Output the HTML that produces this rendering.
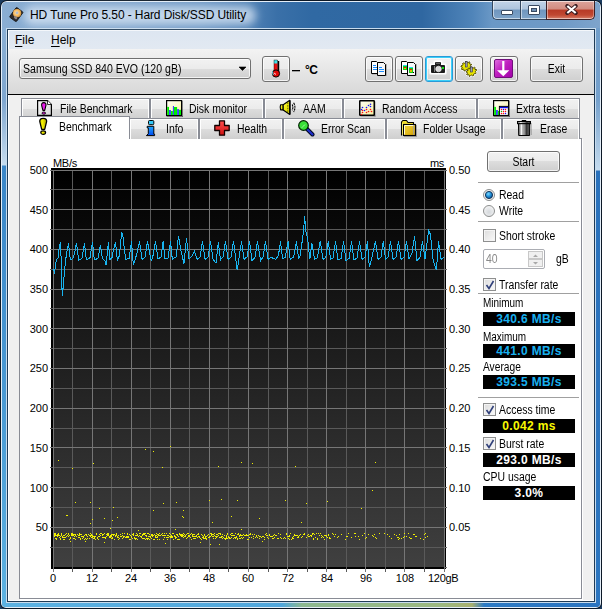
<!DOCTYPE html>
<html><head><meta charset="utf-8">
<style>
*{box-sizing:border-box}
html,body{margin:0;padding:0}
body{width:602px;height:609px;overflow:hidden;position:relative;background:#1b3c60;font-family:"Liberation Sans",sans-serif;font-size:11px;color:#000}
.a{position:absolute}
#win{position:absolute;left:0;top:0;width:602px;height:609px;border-radius:7px 7px 6px 6px;background:#0c1826;overflow:hidden}
#l1{position:absolute;left:1px;top:1px;width:600px;height:607px;border-radius:6px 6px 5px 5px;background:#e4eef8;overflow:hidden}
#blue{position:absolute;left:1px;top:1px;width:598px;height:605px;border-radius:5px 5px 4px 4px;overflow:hidden;background:#3a80c4}
#lstrip{position:absolute;left:0;top:0;width:5px;height:605px;background:linear-gradient(180deg,#8fb3d6 0,#7ea6cf 98px,#c6dcef 163px,#3a86c8 164px,#4a9ad4 400px,#5cb2e2 605px)}
#rstrip{position:absolute;right:0;top:0;width:5px;height:605px;background:linear-gradient(180deg,#6f9cc8 0,#74a0cc 98px,#c4dbee 168px,#2a72bc 169px,#2c76c0 605px)}
#bstrip{position:absolute;left:0;bottom:0;width:598px;height:5px;background:linear-gradient(90deg,#5cb2e2 0,#4fa6dc 280px,#8cb890 300px,#9cb880 440px,#a8b070 470px,#2c7ac4 482px,#2a74c0 598px)}
#titlebar{position:absolute;left:0;top:0;width:598px;height:26px;
 background:linear-gradient(90deg,#8aaed3 0,#7ca2ca 120px,#6a95c2 200px,#5283b6 245px,#3a70a8 275px,#3069a3 310px,#2f67a1 420px,#4f84b9 470px,#6a98c6 490px,#6f9ac6 560px,#7ea4cc 598px)}
#l2{position:absolute;left:6px;top:28px;width:590px;height:575px;background:#c8dcee}
#dk{position:absolute;left:7px;top:29px;width:588px;height:573px;background:#1f3b56}
#glow{position:absolute;left:24px;top:6px;width:232px;height:19px;border-radius:9px;background:rgba(225,236,248,.72);filter:blur(4px)}
#title{position:absolute;left:30px;top:8px;font-size:12px;color:#000;letter-spacing:-0.1px;white-space:nowrap}
#client{position:absolute;left:8px;top:30px;width:586px;height:571px;background:#f0f0f0;border-left:1px solid #fff;border-bottom:1px solid #fff}
#menubar{position:absolute;left:-1px;top:0;width:586px;height:19px;background:linear-gradient(#dde6f1,#e2e9f2);border-top:1px solid #f4f7fb;border-left:1px solid #fff}
.menu{position:absolute;top:1.5px;font-size:12px;line-height:14px}
.menu u{text-decoration:underline;text-underline-offset:1.5px;text-decoration-thickness:1px}
#toolbar{position:absolute;left:-1px;top:19px;width:586px;height:46px;background:linear-gradient(#f3f3f3,#d8d8d8);border-bottom:1px solid #000}
.btn{position:absolute;border:1px solid #707070;border-radius:3px;background:linear-gradient(#f2f2f2 0%,#ebebeb 50%,#dddddd 50%,#cfcfcf 100%);box-shadow:inset 0 0 0 1px rgba(255,255,255,.75)}
.btnf{border-color:#2a9ad8;box-shadow:inset 0 0 0 1px #3cd0f8, inset 0 0 0 2px rgba(255,255,255,.6)}
.tab{position:absolute;height:21px;border:1px solid #898c95;border-bottom:none;background:linear-gradient(#f2f2f2 0%,#ebebeb 50%,#dddddd 50%,#cfcfcf 100%);box-shadow:inset 1px 1px 0 #fff,inset -1px 0 0 #fff;white-space:nowrap;letter-spacing:-0.3px}
.tab span{position:absolute;top:3.8px;line-height:13px;font-size:12px;letter-spacing:0;transform:scaleX(.87);transform-origin:0 0}
.tab2 span{top:3.8px}
.tab svg{position:absolute;top:2px}
#panel{position:absolute;left:11px;top:109px;width:563px;height:461px;background:#fff;border:1px solid #898c95;box-shadow:1px 1px 0 #fff}
.yl{position:absolute;left:0;width:48px;text-align:right;line-height:13px;font-size:11px}
.yr{position:absolute;left:449px;line-height:13px;font-size:11px}
.xl{position:absolute;top:572px;width:40px;text-align:center;line-height:13px;font-size:11px}
.lbl{position:absolute;left:483px;line-height:13px;font-size:12px;white-space:nowrap;transform:scaleX(.87);transform-origin:0 0}
.box{position:absolute;left:483px;width:92px;height:14px;background:#000;color:#18b0f0;font-weight:bold;font-size:12px;text-align:center;line-height:14.5px;letter-spacing:0.35px}
.sep{position:absolute;left:478px;width:101px;height:1px;background:#a0a0a0}
.cb{position:absolute;left:483px;width:13px;height:13px;border:1px solid #8e8f8f;background:linear-gradient(135deg,#dcdcdc,#fafafa);box-shadow:inset 0 0 0 1px #f4f4f4}
</style></head><body>
<div id="win">
 <div id="l1"><div id="blue"><div id="lstrip"></div><div id="rstrip"></div><div id="bstrip"></div><div id="titlebar"></div></div></div>
 <div id="l2"></div><div id="dk"></div>
 <div id="glow"></div>
 <!-- app icon -->
 <svg class="a" style="left:5px;top:4px" width="24" height="22" viewBox="0 0 24 22">
  <defs><radialGradient id="dg" cx=".45" cy=".45" r=".6"><stop offset="0" stop-color="#ffe8b0"/><stop offset=".6" stop-color="#f4b860"/><stop offset="1" stop-color="#c88830"/></radialGradient></defs>
  <g transform="translate(11.3 10.6) rotate(36)"><rect x="-4.2" y="-6" width="8.4" height="12" rx="1" fill="#2c2a2a" stroke="#141414" stroke-width=".8"/></g>
  <circle cx="12.1" cy="9.2" r="4.1" fill="url(#dg)"/>
  <circle cx="12" cy="8.8" r="1.4" fill="#b4bccc"/>
  <ellipse cx="10.6" cy="13.6" rx="1.8" ry="1.3" fill="#8a8282" transform="rotate(36 10.6 13.6)"/>
 </svg>
 <div id="title">HD Tune Pro 5.50 - Hard Disk/SSD Utility</div>
 <!-- caption buttons -->
 <div class="a" style="left:492px;top:1px;width:29px;height:19px;border:1px solid #34475e;border-top:none;border-right:none;border-radius:0 0 0 5px;background:linear-gradient(#c2d4e8 0%,#aec4dc 45%,#7096be 50%,#7ea4ca 100%);box-shadow:inset 0 -1px 0 rgba(255,255,255,.55),inset 1px 0 0 rgba(255,255,255,.55),inset 0 1px 0 rgba(255,255,255,.5)"></div>
 <div class="a" style="left:520px;top:1px;width:27px;height:19px;border:1px solid #34475e;border-top:none;border-right:none;background:linear-gradient(#c2d4e8 0%,#aec4dc 45%,#7096be 50%,#7ea4ca 100%);box-shadow:inset 0 -1px 0 rgba(255,255,255,.55),inset 1px 0 0 rgba(255,255,255,.55),inset 0 1px 0 rgba(255,255,255,.5)"></div>
 <div class="a" style="left:546px;top:1px;width:49px;height:19px;border:1px solid #3e2024;border-top:none;border-radius:0 0 5px 0;background:linear-gradient(#dca49c 0%,#d28c80 45%,#b83a26 50%,#c04832 78%,#d8806a 100%);box-shadow:inset 0 -1px 0 rgba(255,255,255,.5),inset 1px 0 0 rgba(255,255,255,.45),inset -1px 0 0 rgba(255,255,255,.3),inset 0 1px 0 rgba(255,255,255,.6)"></div>
 <div class="a" style="left:501px;top:10px;width:12px;height:5px;background:#fff;border:1px solid #3a4a62;border-radius:1px"></div>
 <div class="a" style="left:528px;top:5px;width:12px;height:10px;background:#fff;border:1px solid #3a4a62;border-radius:1px"></div>
 <div class="a" style="left:531px;top:8px;width:6px;height:4px;background:#7090b4;border:1px solid #3a4a62"></div>
 <svg class="a" style="left:565px;top:4px" width="13" height="11" viewBox="0 0 13 11"><path d="M2.3 2 L10.7 9 M10.7 2 L2.3 9" stroke="#3a1c20" stroke-width="4" stroke-linecap="round"/><path d="M2.3 2 L10.7 9 M10.7 2 L2.3 9" stroke="#fff" stroke-width="2.2" stroke-linecap="butt"/></svg>
 <div id="client">
  <div id="menubar">
   <div class="menu" style="left:6px"><u>F</u>ile</div>
   <div class="menu" style="left:42px"><u>H</u>elp</div>
  </div>
  <div id="toolbar"></div>
 </div>

 <!-- combobox -->
 <div class="btn" style="left:19px;top:58px;width:232px;height:21px;border-radius:3px"></div>
 <div class="a" style="left:23px;top:63px;font-size:12px;line-height:13px;white-space:nowrap;transform:scaleX(.88);transform-origin:0 0">Samsung SSD 840 EVO (120 gB)</div>
 <svg class="a" style="left:238px;top:66px" width="9" height="6"><path d="M1 1H8L4.5 4.5Z" fill="#000" stroke="#000" stroke-width=".6"/></svg>
 <!-- thermometer button -->
 <div class="btn" style="left:262px;top:56px;width:28px;height:26px"></div>
 <svg class="a" style="left:262px;top:56px" width="28" height="26" viewBox="0 0 28 26">
  <rect x="15.6" y="5" width="1.6" height="11" fill="#000"/>
  <rect x="12" y="4" width="3.6" height="12" fill="#e81010"/>
  <rect x="12" y="4" width="3.6" height="3.5" fill="#40e0e8"/>
  <rect x="12" y="4" width="3.6" height="12" fill="none" stroke="#000" stroke-width=".4"/>
  <circle cx="14" cy="17.5" r="3.6" fill="#e00808" stroke="#000" stroke-width="1"/>
  <path d="M10.6 15.5Q10.3 17.5 11.5 19" stroke="#50e0f0" stroke-width="1" fill="none"/>
  <path d="M12.3 16.8Q12.8 18.2 13.8 18.3" stroke="#fff" stroke-width="1" fill="none"/>
 </svg>
 <div class="a" style="left:292px;top:70px;width:8px;height:1px;background:#000;box-shadow:0 0.6px 0 rgba(0,0,0,.5)"></div>
 <div class="a" style="left:305px;top:62.5px;font-size:12px;font-weight:bold;white-space:nowrap;line-height:14px;letter-spacing:-0.6px">°C</div>
 <!-- toolbar buttons -->
 <div class="btn" style="left:365px;top:56px;width:28px;height:26px"></div>
 <div class="btn" style="left:395px;top:56px;width:28px;height:26px"></div>
 <div class="btn btnf" style="left:425px;top:56px;width:28px;height:26px"></div>
 <div class="btn" style="left:455px;top:56px;width:28px;height:26px"></div>
 <div class="btn" style="left:490px;top:56px;width:28px;height:26px"></div>
 <div class="btn" style="left:530px;top:56px;width:53px;height:26px"></div>
 <div class="a" style="left:530px;top:62.5px;width:53px;text-align:center;font-size:12px;line-height:13px;transform:scaleX(.87)">Exit</div>
 <!-- icons -->
 <svg class="a" style="left:366px;top:57px" width="25" height="24" viewBox="0 0 25 24" shape-rendering="crispEdges">
  <path d="M6 6H12V18H6Z" fill="#a0a0a0" opacity=".5"/>
  <path d="M5.5 4.5H10.5L11.5 5.5V16.5H5.5Z" fill="#fff" stroke="#000" shape-rendering="auto"/>
  <g fill="#1a8cff"><rect x="7" y="8" width="3" height="1"/><rect x="7" y="10" width="4" height="1"/><rect x="7" y="12" width="4" height="1"/></g>
  <path d="M12 19H21V7H20V18H12Z" fill="#909090" opacity=".6"/>
  <path d="M11.5 5.5H17.5L19.5 7.5V18.5H11.5Z" fill="#f6f6f6" stroke="#000" shape-rendering="auto"/>
  <g fill="#1a8cff"><rect x="13" y="10" width="3" height="1"/><rect x="13" y="12" width="5" height="1"/><rect x="13" y="14" width="5" height="1"/></g>
 </svg>
 <svg class="a" style="left:396px;top:57px" width="25" height="24" viewBox="0 0 25 24" shape-rendering="crispEdges">
  <path d="M5.5 4.5H10.5L11.5 5.5V16.5H5.5Z" fill="#fff" stroke="#000" shape-rendering="auto"/>
  <rect x="7" y="8" width="4" height="1" fill="#20d8f0"/><rect x="7" y="9" width="4" height="4" fill="#10d010"/><rect x="8" y="10" width="2" height="1" fill="#f01010"/><rect x="8" y="11" width="2" height="1" fill="#e8c000"/>
  <path d="M12 19H21V7H20V18H12Z" fill="#909090" opacity=".6"/>
  <path d="M11.5 5.5H17.5L19.5 7.5V18.5H11.5Z" fill="#f6f6f6" stroke="#000" shape-rendering="auto"/>
  <rect x="13" y="10" width="4" height="1" fill="#20d8f0"/><rect x="13" y="11" width="4" height="5" fill="#10d010"/><rect x="14" y="12" width="2" height="1" fill="#f01010"/><rect x="14" y="13" width="2" height="2" fill="#e8c000"/><rect x="17" y="15" width="1" height="1" fill="#000"/>
 </svg>
 <svg class="a" style="left:426px;top:57px" width="25" height="24" viewBox="0 0 25 24">
  <path d="M8.5 4.5H15.5V7.5H19.5V16.5H4.5V7.5H8.5Z" fill="none" stroke="#fff" stroke-width="2" stroke-linejoin="round"/>
  <rect x="5" y="8" width="14" height="8" rx="1" fill="#1c1c1c"/>
  <rect x="9" y="5" width="6" height="3.5" rx="1" fill="#1c1c1c"/>
  <rect x="10" y="5.7" width="4" height="1" fill="#777"/>
  <rect x="8" y="9" width="1" height="6" fill="#808080"/>
  <circle cx="12.5" cy="12" r="2.8" fill="#d8d8d8" stroke="#fff" stroke-width=".6"/>
  <rect x="16" y="10" width="2" height="2" fill="#10e010"/>
 </svg>
 <svg class="a" style="left:456px;top:57px" width="25" height="24" viewBox="0 0 25 24">
  <g fill="#fff" stroke="#fff" stroke-width="2" stroke-linejoin="round"><polygon points="13.84,7.10 15.37,7.12 15.52,7.90 14.19,8.84 14.07,9.46 15.03,10.37 14.56,11.16 13.02,11.22 12.49,11.70 12.44,13.08 11.56,13.51 10.53,12.65 9.84,12.77 8.80,13.97 7.92,13.84 7.89,12.47 7.36,12.17 5.81,12.63 5.35,12.00 6.33,10.76 6.21,10.18 4.88,9.68 5.05,8.85 6.58,8.32 6.93,7.73 6.44,6.51 7.15,5.87 8.52,6.29 9.18,5.97 9.75,4.60 10.68,4.44 11.25,5.62 11.91,5.72 13.28,4.84 13.99,5.24 13.49,6.63"/><polygon points="19.04,12.50 20.57,12.52 20.72,13.30 19.39,14.24 19.27,14.86 20.23,15.77 19.76,16.56 18.22,16.62 17.69,17.10 17.64,18.48 16.76,18.91 15.73,18.05 15.04,18.17 14.00,19.37 13.12,19.24 13.09,17.87 12.56,17.57 11.01,18.03 10.55,17.40 11.53,16.16 11.41,15.58 10.08,15.08 10.25,14.25 11.78,13.72 12.13,13.13 11.64,11.91 12.35,11.27 13.72,11.69 14.38,11.37 14.95,10.00 15.88,9.84 16.45,11.02 17.11,11.12 18.48,10.24 19.19,10.64 18.69,12.03"/></g>
  <polygon points="13.84,7.10 15.37,7.12 15.52,7.90 14.19,8.84 14.07,9.46 15.03,10.37 14.56,11.16 13.02,11.22 12.49,11.70 12.44,13.08 11.56,13.51 10.53,12.65 9.84,12.77 8.80,13.97 7.92,13.84 7.89,12.47 7.36,12.17 5.81,12.63 5.35,12.00 6.33,10.76 6.21,10.18 4.88,9.68 5.05,8.85 6.58,8.32 6.93,7.73 6.44,6.51 7.15,5.87 8.52,6.29 9.18,5.97 9.75,4.60 10.68,4.44 11.25,5.62 11.91,5.72 13.28,4.84 13.99,5.24 13.49,6.63" fill="#e8e400" stroke="#3c3800" stroke-width=".9" stroke-linejoin="round"/>
  <polygon points="19.04,12.50 20.57,12.52 20.72,13.30 19.39,14.24 19.27,14.86 20.23,15.77 19.76,16.56 18.22,16.62 17.69,17.10 17.64,18.48 16.76,18.91 15.73,18.05 15.04,18.17 14.00,19.37 13.12,19.24 13.09,17.87 12.56,17.57 11.01,18.03 10.55,17.40 11.53,16.16 11.41,15.58 10.08,15.08 10.25,14.25 11.78,13.72 12.13,13.13 11.64,11.91 12.35,11.27 13.72,11.69 14.38,11.37 14.95,10.00 15.88,9.84 16.45,11.02 17.11,11.12 18.48,10.24 19.19,10.64 18.69,12.03" fill="#e8e400" stroke="#3c3800" stroke-width=".9" stroke-linejoin="round"/>
  <rect x="9.3" y="4.6" width="1.9" height="5.4" fill="#a0a0b8" stroke="#303040" stroke-width=".6"/>
  <rect x="14.5" y="10" width="1.9" height="5" fill="#a0a0b8" stroke="#303040" stroke-width=".6"/>
 </svg>
 <svg class="a" style="left:491px;top:57px" width="25" height="24" viewBox="0 0 25 24">
  <defs><linearGradient id="pg" x1="0" y1="0" x2="1" y2="1"><stop offset="0" stop-color="#e070e0"/><stop offset=".45" stop-color="#c020c0"/><stop offset="1" stop-color="#a000a8"/></linearGradient></defs>
  <rect x="3.5" y="2.5" width="18" height="18" rx="1.5" fill="url(#pg)" stroke="#70107a"/>
  <rect x="11.2" y="4" width="2.2" height="10" fill="#fff"/>
  <path d="M6 13.2H18.3L12.3 19.2Z" fill="#fff"/>
 </svg>

 <!-- tabs top row -->
 <div class="tab" style="left:21px;top:98px;width:129px"><span style="left:38px">File Benchmark</span></div>
 <div class="tab" style="left:150px;top:98px;width:114px"><span style="left:38px">Disk monitor</span></div>
 <div class="tab" style="left:264px;top:98px;width:79px"><span style="left:38px">AAM</span></div>
 <div class="tab" style="left:343px;top:98px;width:134px"><span style="left:38px">Random Access</span></div>
 <div class="tab" style="left:477px;top:98px;width:103px"><span style="left:38px">Extra tests</span></div>
 <!-- panel -->
 <div id="panel" style="left:19px;top:138px;width:563px;height:461px"></div>
 <!-- tabs bottom row -->
 <div class="tab tab2" style="left:129px;top:118px;width:70px;height:21px"><span style="left:36px">Info</span></div>
 <div class="tab tab2" style="left:199px;top:118px;width:84px;height:21px"><span style="left:37px">Health</span></div>
 <div class="tab tab2" style="left:283px;top:118px;width:103px;height:21px"><span style="left:37px">Error Scan</span></div>
 <div class="tab tab2" style="left:386px;top:118px;width:116px;height:21px"><span style="left:36px">Folder Usage</span></div>
 <div class="tab tab2" style="left:502px;top:118px;width:78px;height:21px"><span style="left:37px">Erase</span></div>
 <!-- selected tab -->
 <div class="a" style="left:19px;top:116px;width:111px;height:23px;border:1px solid #898c95;border-bottom:none;background:#fff"></div>
 <div class="a" style="left:59px;top:120.5px;line-height:13px;font-size:12px;transform:scaleX(.87);transform-origin:0 0">Benchmark</div>
 <!-- tab icons -->
 <svg class="a" style="left:37px;top:100px" width="16" height="17" viewBox="0 0 16 17">
  <defs><linearGradient id="pgx" x1="0" y1="0" x2="1" y2="1"><stop offset="0" stop-color="#f8f8f8"/><stop offset="1" stop-color="#d8d8d8"/></linearGradient></defs>
  <path d="M0.6 0.6H10.5L14.4 4.5V15.4H0.6Z" fill="url(#pgx)" stroke="#000" stroke-width="1.2"/>
  <path d="M10.5 0.6V4.5H14.4" fill="#fff" stroke="#000" stroke-width=".8"/>
  <path d="M6.8 2.6C4.9 2.6 4.4 3.9 4.7 5.6L5.9 10.4H7.7L8.9 5.6C9.2 3.9 8.7 2.6 6.8 2.6Z" fill="#e818e8" stroke="#000" stroke-width="1.1" stroke-linejoin="round"/>
  <ellipse cx="6.8" cy="13.1" rx="1.8" ry="1.1" fill="#e818e8" stroke="#000" stroke-width=".9"/>
 </svg>
 <svg class="a" style="left:38px;top:117px" width="11" height="19" viewBox="0 0 11 19">
  <defs><linearGradient id="yx" x1="0" y1="0" x2="1" y2="0"><stop offset="0" stop-color="#c8c400"/><stop offset=".35" stop-color="#f8f400"/><stop offset="1" stop-color="#b0a800"/></linearGradient></defs>
  <path d="M5.2 1.3C2.6 1.3 1.6 2.6 1.8 4.6L3.7 12.4H6.7L8.6 4.6C8.8 2.6 7.8 1.3 5.2 1.3Z" fill="url(#yx)" stroke="#000" stroke-width="1.3" stroke-linejoin="round"/>
  <ellipse cx="5.2" cy="15.6" rx="2.4" ry="1.8" fill="url(#yx)" stroke="#000" stroke-width="1.2"/>
 </svg>
 <svg class="a" style="left:163px;top:97px" width="22" height="22" viewBox="0 0 22 22">
  <defs><linearGradient id="py3" x1="0" y1="0" x2="1" y2="1"><stop offset="0" stop-color="#fffff8"/><stop offset="1" stop-color="#f8f0a0"/></linearGradient></defs>
  <rect x="19" y="4" width="1" height="16" fill="#000" opacity=".3"/><rect x="4" y="19" width="16" height="1" fill="#000" opacity=".3"/>
  <rect x="3.6" y="3.6" width="15" height="15" fill="url(#py3)" stroke="#000" stroke-width="1.2"/>
  <g fill="#00f000"><rect x="4.2" y="9.9" width="1.8" height="8.1"/><rect x="7.9" y="14" width="2" height="4"/><rect x="11" y="10" width="3.1" height="8"/><rect x="16" y="12.8" width="2" height="5.2"/></g>
  <g fill="#4040ff"><rect x="6" y="13" width="1.9" height="5"/><rect x="9.9" y="9" width="1.1" height="9"/><rect x="14.1" y="12.1" width="1.9" height="5.9"/></g>
 </svg>
 <svg class="a" style="left:277px;top:97px" width="22" height="22" viewBox="0 0 22 22">
  <defs><linearGradient id="spk" x1="0" y1="0" x2="1" y2="1"><stop offset="0" stop-color="#ffffa0"/><stop offset=".4" stop-color="#f0ec10"/><stop offset="1" stop-color="#d8d000"/></linearGradient></defs>
  <path d="M3.6 7.8H6.2V12.9H3.6Q2.7 10.35 3.6 7.8Z" fill="url(#spk)" stroke="#000" stroke-width="1.1" stroke-linejoin="round"/>
  <path d="M6.2 7.8L12.8 3.3V17.5L6.2 12.9Z" fill="url(#spk)" stroke="#000" stroke-width="1.2" stroke-linejoin="round"/>
  <path d="M12.9 3.5V17.3" stroke="#000" stroke-width="1.3"/>
  <path d="M10.8 5.5V15.5" stroke="#404000" stroke-width=".8" stroke-dasharray="1.6 1"/>
  <path d="M15.2 7.6Q16.5 10.4 15.2 13.2" stroke="#000" stroke-width="1.1" fill="none" stroke-dasharray="2 .6"/>
  <path d="M16.6 5.8Q19.3 10.4 16.6 15" stroke="#000" stroke-width="1.1" fill="none" stroke-dasharray="2.2 .7"/>
 </svg>
 <svg class="a" style="left:359px;top:100px" width="17" height="17" viewBox="0 0 17 17">
  <defs><linearGradient id="py2" x1="0" y1="0" x2="1" y2="1"><stop offset="0" stop-color="#fffff4"/><stop offset="1" stop-color="#f6f0a0"/></linearGradient></defs>
  <rect x="15.5" y="1.5" width="1" height="15" fill="#000" opacity=".35"/><rect x="1.5" y="15.5" width="15" height="1" fill="#000" opacity=".35"/>
  <rect x="0.75" y="0.75" width="14.5" height="14.5" rx=".5" fill="url(#py2)" stroke="#000" stroke-width="1.5"/>
  <g fill="#1010ff"><circle cx="11.5" cy="4.3" r=".8"/><circle cx="9.5" cy="5.5" r=".8"/><circle cx="11.5" cy="6.5" r=".8"/><circle cx="3.5" cy="7.5" r=".8"/><circle cx="7.5" cy="7.5" r=".8"/><circle cx="2.5" cy="9.5" r=".8"/><circle cx="5.5" cy="10.5" r=".8"/></g>
  <g fill="#ff1010"><circle cx="7.5" cy="9.5" r=".8"/><circle cx="11.5" cy="9.5" r=".8"/><circle cx="3.5" cy="10.5" r=".8"/><circle cx="9.5" cy="11.5" r=".8"/><circle cx="12.5" cy="11.5" r=".8"/><circle cx="3.5" cy="12.5" r=".8"/><circle cx="7.5" cy="12.5" r=".8"/><circle cx="2.5" cy="14.5" r=".8"/></g>
 </svg>
 <svg class="a" style="left:490px;top:97px" width="22" height="22" viewBox="0 0 22 22">
  <rect x="19" y="4" width="1" height="16" fill="#000" opacity=".3"/><rect x="4" y="19" width="16" height="1" fill="#000" opacity=".3"/>
  <rect x="3.6" y="3.6" width="15" height="15" fill="url(#py3)" stroke="#000" stroke-width="1.2"/>
  <rect x="4.2" y="9.9" width="1.8" height="8.1" fill="#00f000"/><rect x="6" y="13" width="1.9" height="5" fill="#4040ff"/><rect x="7.9" y="14" width="1.1" height="4" fill="#00f000"/>
  <rect x="9.4" y="9.4" width="9" height="9" fill="#fff" stroke="#000" stroke-width="1"/>
  <rect x="9.9" y="9.9" width="8" height="1.3" fill="#1010f0"/>
  <circle cx="11.5" cy="12.4" r=".75" fill="#ff1010"/><circle cx="13.5" cy="12.4" r=".75" fill="#1010ff"/><circle cx="15.5" cy="12.4" r=".75" fill="#ff1010"/><circle cx="11.5" cy="14.4" r=".75" fill="#10c010"/><circle cx="13.5" cy="14.4" r=".75" fill="#ff1010"/><circle cx="15.5" cy="14.4" r=".75" fill="#ff1010"/><circle cx="11.5" cy="16.4" r=".75" fill="#ff1010"/><circle cx="13.5" cy="16.4" r=".75" fill="#ff1010"/><circle cx="15.5" cy="16.4" r=".75" fill="#1010ff"/>
 </svg>
 <svg class="a" style="left:143px;top:117px" width="16" height="22" viewBox="0 0 16 22">
  <defs><linearGradient id="ib" x1="0" y1="0" x2="0" y2="1"><stop offset="0" stop-color="#20a8ff"/><stop offset="1" stop-color="#0048f0"/></linearGradient></defs>
  <rect x="5.5" y="3.5" width="5.3" height="4.2" rx="1" fill="#34c8f8" stroke="#000" stroke-width="1"/>
  <path d="M4.2 9.3H10.8V17.2H11.6V18.6H3.4L5.3 16.8V10.9H4.2Z" fill="url(#ib)" stroke="#000" stroke-width="1" stroke-linejoin="round"/>
 </svg>
 <svg class="a" style="left:214px;top:120px" width="16" height="16" viewBox="0 0 16 16">
  <defs><linearGradient id="rc" x1="0" y1="0" x2="0" y2="1"><stop offset="0" stop-color="#ff5050"/><stop offset="1" stop-color="#d01010"/></linearGradient></defs>
  <path d="M5.5 0.8H10.5V5.5H15.2V10.5H10.5V15.2H5.5V10.5H0.8V5.5H5.5Z" fill="url(#rc)" stroke="#100000" stroke-width="1.3" stroke-linejoin="round"/>
 </svg>
 <svg class="a" style="left:298px;top:120px" width="17" height="17" viewBox="0 0 17 17">
  <path d="M8.5 8.5L14.5 14.5" stroke="#000820" stroke-width="4" stroke-linecap="round"/>
  <path d="M8.5 8.5L14.5 14.5" stroke="#2030d0" stroke-width="2" stroke-linecap="round"/>
  <circle cx="5.5" cy="5.5" r="4.8" fill="#38e038" stroke="#002000" stroke-width="1.2"/>
  <path d="M4 7.5L7.5 4" stroke="#d8ffd8" stroke-width="1" stroke-dasharray="1.5 1"/>
 </svg>
 <svg class="a" style="left:398px;top:118px" width="20" height="20" viewBox="0 0 20 20">
  <defs><linearGradient id="fd" x1="0" y1="0" x2="1" y2="1"><stop offset="0" stop-color="#f4d840"/><stop offset="1" stop-color="#d4a000"/></linearGradient></defs>
  <rect x="18" y="7" width="1" height="11" fill="#000" opacity=".25"/><rect x="6" y="18" width="13" height="1" fill="#000" opacity=".25"/>
  <path d="M3.5 17.5V4L4.8 2.5H8.5L10 4.5H15.5V6.5" fill="#f0dc30" stroke="#000" stroke-width="1.1" stroke-linejoin="round"/>
  <path d="M4.6 5V16" stroke="#fff870" stroke-width="1"/>
  <rect x="5.5" y="6.5" width="12" height="11" fill="url(#fd)" stroke="#000" stroke-width="1.1"/>
  <path d="M6.5 16.5V7.5H16" stroke="#fffbd0" stroke-width="1" fill="none"/>
  <rect x="15.2" y="7.2" width="1" height="9.6" fill="#a0a0a0"/>
 </svg>
 <svg class="a" style="left:514px;top:118px" width="20" height="20" viewBox="0 0 20 20">
  <defs><linearGradient id="tr" x1="0" y1="0" x2="1" y2="0"><stop offset="0" stop-color="#707070"/><stop offset=".15" stop-color="#a8a8a8"/><stop offset=".26" stop-color="#fafafa"/><stop offset=".36" stop-color="#b4b4b4"/><stop offset=".55" stop-color="#8c8c8c"/><stop offset=".72" stop-color="#303030"/><stop offset=".86" stop-color="#5c5c5c"/><stop offset="1" stop-color="#202020"/></linearGradient></defs>
  <rect x="7.8" y="2" width="4.4" height="2" fill="#000"/>
  <rect x="3.5" y="3.5" width="13" height="2.2" fill="url(#tr)" stroke="#000" stroke-width="1"/>
  <path d="M4.5 5.7H15.8L15.6 17.5H4.7Z" fill="url(#tr)" stroke="#000" stroke-width="1"/>
  <rect x="17" y="5" width="1" height="12" fill="#000" opacity=".2"/>
 </svg>

 <svg width="602" height="609" style="position:absolute;left:0;top:0">
<defs><linearGradient id="cbg" x1="0" y1="0" x2="0" y2="1"><stop offset="0" stop-color="#000"/><stop offset="1" stop-color="#404040"/></linearGradient></defs>
<rect x="51" y="168" width="395" height="401" fill="#000"/>
<rect x="53" y="170" width="392" height="397" fill="url(#cbg)"/>
<path d="M50 189.5H445 M50 229.5H445 M50 269.5H445 M50 308.5H445 M50 348.5H445 M50 388.5H445 M50 428.5H445 M50 467.5H445 M50 507.5H445 M50 547.5H445 M72.5 170V572 M111.5 170V572 M150.5 170V572 M189.5 170V572 M228.5 170V572 M268.5 170V572 M307.5 170V572 M346.5 170V572 M385.5 170V572 M424.5 170V572" stroke="#5a5a5a" stroke-width="1" fill="none" shape-rendering="crispEdges"/>
<path d="M50 170.5H445 M50 209.5H445 M50 249.5H445 M50 289.5H445 M50 328.5H445 M50 368.5H445 M50 408.5H445 M50 447.5H445 M50 487.5H445 M50 527.5H445 M53.5 170V572 M92.5 170V572 M131.5 170V572 M170.5 170V572 M209.5 170V572 M248.5 170V572 M287.5 170V572 M326.5 170V572 M365.5 170V572 M404.5 170V572 M444.5 170V572" stroke="#767676" stroke-width="1" fill="none" shape-rendering="crispEdges"/>
<path d="M445 170.5H447 M445 189.5H447 M445 209.5H447 M445 229.5H447 M445 249.5H447 M445 269.5H447 M445 289.5H447 M445 308.5H447 M445 328.5H447 M445 348.5H447 M445 368.5H447 M445 388.5H447 M445 408.5H447 M445 428.5H447 M445 447.5H447 M445 467.5H447 M445 487.5H447 M445 507.5H447 M445 527.5H447 M445 547.5H447 M445 567.5H447" stroke="#6e6e6e" stroke-width="1" fill="none" shape-rendering="crispEdges"/>
<g fill="#f0f000"><rect x="58" y="460" width="1" height="1"/><rect x="72" y="468" width="1" height="1"/><rect x="93" y="463" width="1" height="1"/><rect x="145" y="449" width="1" height="1"/><rect x="75" y="502" width="1" height="1"/><rect x="90" y="502" width="1" height="1"/><rect x="99" y="508" width="1" height="1"/><rect x="113" y="507" width="1" height="1"/><rect x="66" y="515" width="1" height="1"/><rect x="67" y="515" width="1" height="1"/><rect x="92" y="519" width="1" height="1"/><rect x="90" y="523" width="1" height="1"/><rect x="104" y="518" width="1" height="1"/><rect x="112" y="520" width="1" height="1"/><rect x="117" y="517" width="1" height="1"/><rect x="110" y="528" width="1" height="1"/><rect x="138" y="530" width="1" height="1"/><rect x="70" y="541" width="1" height="1"/><rect x="85" y="541" width="1" height="1"/><rect x="104" y="542" width="1" height="1"/><rect x="153" y="451" width="1" height="1"/><rect x="170" y="446" width="1" height="1"/><rect x="162" y="467" width="1" height="1"/><rect x="218" y="466" width="1" height="1"/><rect x="241" y="462" width="1" height="1"/><rect x="163" y="503" width="1" height="1"/><rect x="176" y="502" width="1" height="1"/><rect x="209" y="500" width="1" height="1"/><rect x="221" y="499" width="1" height="1"/><rect x="237" y="500" width="1" height="1"/><rect x="153" y="510" width="1" height="1"/><rect x="183" y="510" width="1" height="1"/><rect x="182" y="516" width="1" height="1"/><rect x="183" y="517" width="1" height="1"/><rect x="231" y="516" width="1" height="1"/><rect x="212" y="522" width="1" height="1"/><rect x="175" y="529" width="1" height="1"/><rect x="241" y="529" width="1" height="1"/><rect x="165" y="543" width="1" height="1"/><rect x="200" y="542" width="1" height="1"/><rect x="210" y="544" width="1" height="1"/><rect x="219" y="544" width="1" height="1"/><rect x="252" y="463" width="1" height="1"/><rect x="295" y="466" width="1" height="1"/><rect x="285" y="500" width="1" height="1"/><rect x="306" y="503" width="1" height="1"/><rect x="327" y="501" width="1" height="1"/><rect x="259" y="518" width="1" height="1"/><rect x="301" y="522" width="1" height="1"/><rect x="262" y="541" width="1" height="1"/><rect x="375" y="462" width="1" height="1"/><rect x="372" y="490" width="1" height="1"/><rect x="361" y="508" width="1" height="1"/><rect x="54" y="534" width="1" height="1"/><rect x="54" y="533" width="1" height="1"/><rect x="54" y="535" width="1" height="1"/><rect x="54" y="536" width="1" height="1"/><rect x="55" y="535" width="1" height="1"/><rect x="55" y="533" width="1" height="1"/><rect x="55" y="538" width="1" height="1"/><rect x="55" y="534" width="1" height="1"/><rect x="56" y="539" width="1" height="1"/><rect x="56" y="535" width="1" height="1"/><rect x="56" y="538" width="1" height="1"/><rect x="57" y="534" width="1" height="1"/><rect x="57" y="535" width="1" height="1"/><rect x="57" y="536" width="1" height="1"/><rect x="58" y="535" width="1" height="1"/><rect x="58" y="533" width="1" height="1"/><rect x="58" y="534" width="1" height="1"/><rect x="59" y="535" width="1" height="1"/><rect x="59" y="535" width="1" height="1"/><rect x="59" y="537" width="1" height="1"/><rect x="60" y="536" width="1" height="1"/><rect x="60" y="538" width="1" height="1"/><rect x="60" y="539" width="1" height="1"/><rect x="61" y="535" width="1" height="1"/><rect x="61" y="534" width="1" height="1"/><rect x="61" y="533" width="1" height="1"/><rect x="62" y="536" width="1" height="1"/><rect x="62" y="537" width="1" height="1"/><rect x="63" y="535" width="1" height="1"/><rect x="63" y="539" width="1" height="1"/><rect x="63" y="537" width="1" height="1"/><rect x="63" y="537" width="1" height="1"/><rect x="64" y="539" width="1" height="1"/><rect x="64" y="535" width="1" height="1"/><rect x="64" y="537" width="1" height="1"/><rect x="64" y="535" width="1" height="1"/><rect x="65" y="534" width="1" height="1"/><rect x="65" y="537" width="1" height="1"/><rect x="65" y="534" width="1" height="1"/><rect x="66" y="533" width="1" height="1"/><rect x="66" y="536" width="1" height="1"/><rect x="67" y="535" width="1" height="1"/><rect x="67" y="535" width="1" height="1"/><rect x="68" y="534" width="1" height="1"/><rect x="68" y="534" width="1" height="1"/><rect x="68" y="536" width="1" height="1"/><rect x="68" y="533" width="1" height="1"/><rect x="69" y="535" width="1" height="1"/><rect x="69" y="539" width="1" height="1"/><rect x="70" y="537" width="1" height="1"/><rect x="70" y="538" width="1" height="1"/><rect x="71" y="535" width="1" height="1"/><rect x="71" y="534" width="1" height="1"/><rect x="71" y="533" width="1" height="1"/><rect x="72" y="534" width="1" height="1"/><rect x="72" y="533" width="1" height="1"/><rect x="72" y="534" width="1" height="1"/><rect x="72" y="535" width="1" height="1"/><rect x="73" y="538" width="1" height="1"/><rect x="73" y="534" width="1" height="1"/><rect x="73" y="535" width="1" height="1"/><rect x="74" y="538" width="1" height="1"/><rect x="74" y="536" width="1" height="1"/><rect x="74" y="534" width="1" height="1"/><rect x="75" y="535" width="1" height="1"/><rect x="75" y="534" width="1" height="1"/><rect x="75" y="539" width="1" height="1"/><rect x="76" y="536" width="1" height="1"/><rect x="76" y="536" width="1" height="1"/><rect x="77" y="534" width="1" height="1"/><rect x="77" y="534" width="1" height="1"/><rect x="78" y="535" width="1" height="1"/><rect x="78" y="537" width="1" height="1"/><rect x="79" y="537" width="1" height="1"/><rect x="79" y="534" width="1" height="1"/><rect x="79" y="535" width="1" height="1"/><rect x="79" y="533" width="1" height="1"/><rect x="80" y="534" width="1" height="1"/><rect x="80" y="539" width="1" height="1"/><rect x="80" y="538" width="1" height="1"/><rect x="81" y="534" width="1" height="1"/><rect x="81" y="534" width="1" height="1"/><rect x="81" y="536" width="1" height="1"/><rect x="82" y="538" width="1" height="1"/><rect x="82" y="536" width="1" height="1"/><rect x="82" y="536" width="1" height="1"/><rect x="83" y="537" width="1" height="1"/><rect x="83" y="536" width="1" height="1"/><rect x="83" y="537" width="1" height="1"/><rect x="84" y="539" width="1" height="1"/><rect x="84" y="535" width="1" height="1"/><rect x="85" y="534" width="1" height="1"/><rect x="85" y="538" width="1" height="1"/><rect x="85" y="538" width="1" height="1"/><rect x="86" y="535" width="1" height="1"/><rect x="86" y="534" width="1" height="1"/><rect x="86" y="539" width="1" height="1"/><rect x="87" y="536" width="1" height="1"/><rect x="87" y="538" width="1" height="1"/><rect x="88" y="534" width="1" height="1"/><rect x="88" y="534" width="1" height="1"/><rect x="88" y="534" width="1" height="1"/><rect x="89" y="538" width="1" height="1"/><rect x="89" y="535" width="1" height="1"/><rect x="89" y="538" width="1" height="1"/><rect x="90" y="536" width="1" height="1"/><rect x="90" y="536" width="1" height="1"/><rect x="90" y="535" width="1" height="1"/><rect x="90" y="533" width="1" height="1"/><rect x="91" y="534" width="1" height="1"/><rect x="91" y="537" width="1" height="1"/><rect x="91" y="535" width="1" height="1"/><rect x="92" y="537" width="1" height="1"/><rect x="92" y="536" width="1" height="1"/><rect x="92" y="535" width="1" height="1"/><rect x="93" y="536" width="1" height="1"/><rect x="93" y="538" width="1" height="1"/><rect x="93" y="536" width="1" height="1"/><rect x="94" y="537" width="1" height="1"/><rect x="94" y="536" width="1" height="1"/><rect x="94" y="538" width="1" height="1"/><rect x="95" y="539" width="1" height="1"/><rect x="95" y="536" width="1" height="1"/><rect x="96" y="534" width="1" height="1"/><rect x="96" y="533" width="1" height="1"/><rect x="96" y="533" width="1" height="1"/><rect x="97" y="538" width="1" height="1"/><rect x="97" y="537" width="1" height="1"/><rect x="97" y="538" width="1" height="1"/><rect x="98" y="539" width="1" height="1"/><rect x="98" y="536" width="1" height="1"/><rect x="99" y="534" width="1" height="1"/><rect x="99" y="536" width="1" height="1"/><rect x="99" y="534" width="1" height="1"/><rect x="100" y="533" width="1" height="1"/><rect x="100" y="535" width="1" height="1"/><rect x="100" y="535" width="1" height="1"/><rect x="101" y="533" width="1" height="1"/><rect x="102" y="535" width="1" height="1"/><rect x="102" y="537" width="1" height="1"/><rect x="102" y="534" width="1" height="1"/><rect x="103" y="537" width="1" height="1"/><rect x="103" y="534" width="1" height="1"/><rect x="104" y="533" width="1" height="1"/><rect x="104" y="537" width="1" height="1"/><rect x="104" y="533" width="1" height="1"/><rect x="105" y="537" width="1" height="1"/><rect x="105" y="538" width="1" height="1"/><rect x="105" y="538" width="1" height="1"/><rect x="106" y="536" width="1" height="1"/><rect x="106" y="534" width="1" height="1"/><rect x="107" y="534" width="1" height="1"/><rect x="107" y="533" width="1" height="1"/><rect x="107" y="535" width="1" height="1"/><rect x="108" y="535" width="1" height="1"/><rect x="108" y="534" width="1" height="1"/><rect x="108" y="533" width="1" height="1"/><rect x="108" y="533" width="1" height="1"/><rect x="109" y="536" width="1" height="1"/><rect x="109" y="536" width="1" height="1"/><rect x="109" y="537" width="1" height="1"/><rect x="110" y="536" width="1" height="1"/><rect x="110" y="535" width="1" height="1"/><rect x="110" y="537" width="1" height="1"/><rect x="111" y="538" width="1" height="1"/><rect x="111" y="536" width="1" height="1"/><rect x="111" y="535" width="1" height="1"/><rect x="111" y="534" width="1" height="1"/><rect x="112" y="537" width="1" height="1"/><rect x="112" y="534" width="1" height="1"/><rect x="112" y="538" width="1" height="1"/><rect x="113" y="535" width="1" height="1"/><rect x="113" y="535" width="1" height="1"/><rect x="113" y="534" width="1" height="1"/><rect x="114" y="539" width="1" height="1"/><rect x="114" y="534" width="1" height="1"/><rect x="115" y="535" width="1" height="1"/><rect x="115" y="535" width="1" height="1"/><rect x="115" y="536" width="1" height="1"/><rect x="115" y="536" width="1" height="1"/><rect x="116" y="534" width="1" height="1"/><rect x="116" y="535" width="1" height="1"/><rect x="116" y="533" width="1" height="1"/><rect x="117" y="536" width="1" height="1"/><rect x="117" y="537" width="1" height="1"/><rect x="118" y="535" width="1" height="1"/><rect x="118" y="539" width="1" height="1"/><rect x="118" y="537" width="1" height="1"/><rect x="119" y="538" width="1" height="1"/><rect x="120" y="534" width="1" height="1"/><rect x="120" y="536" width="1" height="1"/><rect x="121" y="536" width="1" height="1"/><rect x="122" y="533" width="1" height="1"/><rect x="122" y="535" width="1" height="1"/><rect x="122" y="538" width="1" height="1"/><rect x="123" y="536" width="1" height="1"/><rect x="123" y="536" width="1" height="1"/><rect x="123" y="537" width="1" height="1"/><rect x="124" y="536" width="1" height="1"/><rect x="124" y="533" width="1" height="1"/><rect x="124" y="533" width="1" height="1"/><rect x="125" y="537" width="1" height="1"/><rect x="125" y="537" width="1" height="1"/><rect x="126" y="536" width="1" height="1"/><rect x="126" y="537" width="1" height="1"/><rect x="127" y="534" width="1" height="1"/><rect x="127" y="537" width="1" height="1"/><rect x="127" y="536" width="1" height="1"/><rect x="127" y="533" width="1" height="1"/><rect x="128" y="537" width="1" height="1"/><rect x="128" y="537" width="1" height="1"/><rect x="128" y="536" width="1" height="1"/><rect x="129" y="534" width="1" height="1"/><rect x="129" y="539" width="1" height="1"/><rect x="130" y="535" width="1" height="1"/><rect x="130" y="539" width="1" height="1"/><rect x="130" y="535" width="1" height="1"/><rect x="130" y="539" width="1" height="1"/><rect x="131" y="536" width="1" height="1"/><rect x="131" y="536" width="1" height="1"/><rect x="131" y="537" width="1" height="1"/><rect x="132" y="538" width="1" height="1"/><rect x="132" y="534" width="1" height="1"/><rect x="133" y="533" width="1" height="1"/><rect x="133" y="535" width="1" height="1"/><rect x="133" y="534" width="1" height="1"/><rect x="134" y="538" width="1" height="1"/><rect x="134" y="537" width="1" height="1"/><rect x="134" y="538" width="1" height="1"/><rect x="135" y="538" width="1" height="1"/><rect x="135" y="535" width="1" height="1"/><rect x="135" y="539" width="1" height="1"/><rect x="136" y="535" width="1" height="1"/><rect x="136" y="533" width="1" height="1"/><rect x="136" y="538" width="1" height="1"/><rect x="136" y="538" width="1" height="1"/><rect x="137" y="535" width="1" height="1"/><rect x="137" y="534" width="1" height="1"/><rect x="137" y="539" width="1" height="1"/><rect x="138" y="536" width="1" height="1"/><rect x="139" y="533" width="1" height="1"/><rect x="139" y="535" width="1" height="1"/><rect x="140" y="533" width="1" height="1"/><rect x="140" y="536" width="1" height="1"/><rect x="141" y="537" width="1" height="1"/><rect x="141" y="536" width="1" height="1"/><rect x="142" y="535" width="1" height="1"/><rect x="142" y="534" width="1" height="1"/><rect x="142" y="538" width="1" height="1"/><rect x="143" y="538" width="1" height="1"/><rect x="143" y="534" width="1" height="1"/><rect x="143" y="533" width="1" height="1"/><rect x="144" y="533" width="1" height="1"/><rect x="144" y="534" width="1" height="1"/><rect x="144" y="538" width="1" height="1"/><rect x="145" y="535" width="1" height="1"/><rect x="145" y="535" width="1" height="1"/><rect x="145" y="533" width="1" height="1"/><rect x="145" y="539" width="1" height="1"/><rect x="146" y="536" width="1" height="1"/><rect x="146" y="538" width="1" height="1"/><rect x="146" y="535" width="1" height="1"/><rect x="146" y="535" width="1" height="1"/><rect x="147" y="539" width="1" height="1"/><rect x="147" y="538" width="1" height="1"/><rect x="147" y="533" width="1" height="1"/><rect x="148" y="536" width="1" height="1"/><rect x="148" y="533" width="1" height="1"/><rect x="148" y="538" width="1" height="1"/><rect x="149" y="539" width="1" height="1"/><rect x="149" y="534" width="1" height="1"/><rect x="149" y="536" width="1" height="1"/><rect x="150" y="537" width="1" height="1"/><rect x="150" y="537" width="1" height="1"/><rect x="150" y="536" width="1" height="1"/><rect x="150" y="537" width="1" height="1"/><rect x="151" y="538" width="1" height="1"/><rect x="151" y="535" width="1" height="1"/><rect x="151" y="534" width="1" height="1"/><rect x="152" y="534" width="1" height="1"/><rect x="152" y="536" width="1" height="1"/><rect x="152" y="535" width="1" height="1"/><rect x="152" y="536" width="1" height="1"/><rect x="153" y="535" width="1" height="1"/><rect x="153" y="539" width="1" height="1"/><rect x="154" y="534" width="1" height="1"/><rect x="154" y="539" width="1" height="1"/><rect x="155" y="536" width="1" height="1"/><rect x="155" y="535" width="1" height="1"/><rect x="155" y="537" width="1" height="1"/><rect x="156" y="533" width="1" height="1"/><rect x="156" y="535" width="1" height="1"/><rect x="156" y="537" width="1" height="1"/><rect x="157" y="536" width="1" height="1"/><rect x="157" y="539" width="1" height="1"/><rect x="157" y="537" width="1" height="1"/><rect x="157" y="534" width="1" height="1"/><rect x="158" y="535" width="1" height="1"/><rect x="158" y="534" width="1" height="1"/><rect x="158" y="535" width="1" height="1"/><rect x="159" y="539" width="1" height="1"/><rect x="159" y="535" width="1" height="1"/><rect x="159" y="539" width="1" height="1"/><rect x="159" y="533" width="1" height="1"/><rect x="160" y="535" width="1" height="1"/><rect x="161" y="534" width="1" height="1"/><rect x="162" y="533" width="1" height="1"/><rect x="162" y="535" width="1" height="1"/><rect x="162" y="535" width="1" height="1"/><rect x="162" y="533" width="1" height="1"/><rect x="163" y="535" width="1" height="1"/><rect x="163" y="539" width="1" height="1"/><rect x="163" y="535" width="1" height="1"/><rect x="164" y="537" width="1" height="1"/><rect x="164" y="533" width="1" height="1"/><rect x="164" y="535" width="1" height="1"/><rect x="165" y="535" width="1" height="1"/><rect x="165" y="535" width="1" height="1"/><rect x="166" y="533" width="1" height="1"/><rect x="166" y="533" width="1" height="1"/><rect x="166" y="537" width="1" height="1"/><rect x="167" y="535" width="1" height="1"/><rect x="167" y="539" width="1" height="1"/><rect x="167" y="537" width="1" height="1"/><rect x="168" y="535" width="1" height="1"/><rect x="168" y="537" width="1" height="1"/><rect x="169" y="533" width="1" height="1"/><rect x="169" y="536" width="1" height="1"/><rect x="170" y="534" width="1" height="1"/><rect x="170" y="536" width="1" height="1"/><rect x="170" y="537" width="1" height="1"/><rect x="171" y="537" width="1" height="1"/><rect x="171" y="536" width="1" height="1"/><rect x="171" y="535" width="1" height="1"/><rect x="172" y="533" width="1" height="1"/><rect x="172" y="537" width="1" height="1"/><rect x="172" y="533" width="1" height="1"/><rect x="172" y="536" width="1" height="1"/><rect x="173" y="539" width="1" height="1"/><rect x="173" y="533" width="1" height="1"/><rect x="174" y="536" width="1" height="1"/><rect x="174" y="535" width="1" height="1"/><rect x="174" y="535" width="1" height="1"/><rect x="175" y="537" width="1" height="1"/><rect x="175" y="537" width="1" height="1"/><rect x="175" y="538" width="1" height="1"/><rect x="175" y="536" width="1" height="1"/><rect x="176" y="537" width="1" height="1"/><rect x="176" y="534" width="1" height="1"/><rect x="176" y="534" width="1" height="1"/><rect x="177" y="535" width="1" height="1"/><rect x="177" y="539" width="1" height="1"/><rect x="177" y="534" width="1" height="1"/><rect x="178" y="539" width="1" height="1"/><rect x="178" y="536" width="1" height="1"/><rect x="179" y="533" width="1" height="1"/><rect x="179" y="534" width="1" height="1"/><rect x="179" y="539" width="1" height="1"/><rect x="180" y="535" width="1" height="1"/><rect x="180" y="534" width="1" height="1"/><rect x="181" y="534" width="1" height="1"/><rect x="181" y="536" width="1" height="1"/><rect x="181" y="535" width="1" height="1"/><rect x="181" y="534" width="1" height="1"/><rect x="182" y="536" width="1" height="1"/><rect x="182" y="534" width="1" height="1"/><rect x="182" y="535" width="1" height="1"/><rect x="183" y="535" width="1" height="1"/><rect x="183" y="537" width="1" height="1"/><rect x="183" y="533" width="1" height="1"/><rect x="183" y="535" width="1" height="1"/><rect x="184" y="536" width="1" height="1"/><rect x="184" y="534" width="1" height="1"/><rect x="185" y="535" width="1" height="1"/><rect x="185" y="536" width="1" height="1"/><rect x="186" y="538" width="1" height="1"/><rect x="186" y="534" width="1" height="1"/><rect x="187" y="533" width="1" height="1"/><rect x="187" y="537" width="1" height="1"/><rect x="188" y="535" width="1" height="1"/><rect x="188" y="533" width="1" height="1"/><rect x="188" y="536" width="1" height="1"/><rect x="189" y="536" width="1" height="1"/><rect x="189" y="536" width="1" height="1"/><rect x="189" y="535" width="1" height="1"/><rect x="190" y="534" width="1" height="1"/><rect x="190" y="537" width="1" height="1"/><rect x="190" y="534" width="1" height="1"/><rect x="191" y="539" width="1" height="1"/><rect x="191" y="533" width="1" height="1"/><rect x="192" y="536" width="1" height="1"/><rect x="192" y="534" width="1" height="1"/><rect x="192" y="535" width="1" height="1"/><rect x="193" y="538" width="1" height="1"/><rect x="193" y="534" width="1" height="1"/><rect x="193" y="536" width="1" height="1"/><rect x="194" y="534" width="1" height="1"/><rect x="194" y="538" width="1" height="1"/><rect x="194" y="536" width="1" height="1"/><rect x="195" y="538" width="1" height="1"/><rect x="195" y="536" width="1" height="1"/><rect x="195" y="536" width="1" height="1"/><rect x="196" y="536" width="1" height="1"/><rect x="196" y="536" width="1" height="1"/><rect x="196" y="535" width="1" height="1"/><rect x="196" y="536" width="1" height="1"/><rect x="197" y="534" width="1" height="1"/><rect x="197" y="537" width="1" height="1"/><rect x="197" y="534" width="1" height="1"/><rect x="198" y="534" width="1" height="1"/><rect x="198" y="533" width="1" height="1"/><rect x="198" y="536" width="1" height="1"/><rect x="198" y="536" width="1" height="1"/><rect x="199" y="537" width="1" height="1"/><rect x="199" y="536" width="1" height="1"/><rect x="199" y="536" width="1" height="1"/><rect x="200" y="538" width="1" height="1"/><rect x="201" y="534" width="1" height="1"/><rect x="201" y="539" width="1" height="1"/><rect x="202" y="537" width="1" height="1"/><rect x="202" y="535" width="1" height="1"/><rect x="203" y="538" width="1" height="1"/><rect x="203" y="537" width="1" height="1"/><rect x="203" y="536" width="1" height="1"/><rect x="204" y="534" width="1" height="1"/><rect x="204" y="535" width="1" height="1"/><rect x="204" y="534" width="1" height="1"/><rect x="204" y="538" width="1" height="1"/><rect x="205" y="538" width="1" height="1"/><rect x="205" y="537" width="1" height="1"/><rect x="205" y="536" width="1" height="1"/><rect x="206" y="538" width="1" height="1"/><rect x="206" y="536" width="1" height="1"/><rect x="206" y="539" width="1" height="1"/><rect x="207" y="535" width="1" height="1"/><rect x="207" y="535" width="1" height="1"/><rect x="208" y="537" width="1" height="1"/><rect x="208" y="534" width="1" height="1"/><rect x="208" y="537" width="1" height="1"/><rect x="209" y="536" width="1" height="1"/><rect x="209" y="537" width="1" height="1"/><rect x="210" y="533" width="1" height="1"/><rect x="210" y="536" width="1" height="1"/><rect x="210" y="536" width="1" height="1"/><rect x="211" y="534" width="1" height="1"/><rect x="211" y="533" width="1" height="1"/><rect x="211" y="535" width="1" height="1"/><rect x="211" y="535" width="1" height="1"/><rect x="212" y="536" width="1" height="1"/><rect x="212" y="534" width="1" height="1"/><rect x="213" y="538" width="1" height="1"/><rect x="213" y="534" width="1" height="1"/><rect x="213" y="536" width="1" height="1"/><rect x="214" y="535" width="1" height="1"/><rect x="214" y="533" width="1" height="1"/><rect x="215" y="536" width="1" height="1"/><rect x="215" y="538" width="1" height="1"/><rect x="215" y="538" width="1" height="1"/><rect x="216" y="536" width="1" height="1"/><rect x="216" y="534" width="1" height="1"/><rect x="216" y="537" width="1" height="1"/><rect x="216" y="536" width="1" height="1"/><rect x="217" y="534" width="1" height="1"/><rect x="217" y="536" width="1" height="1"/><rect x="217" y="536" width="1" height="1"/><rect x="218" y="535" width="1" height="1"/><rect x="218" y="533" width="1" height="1"/><rect x="219" y="533" width="1" height="1"/><rect x="219" y="537" width="1" height="1"/><rect x="219" y="537" width="1" height="1"/><rect x="220" y="534" width="1" height="1"/><rect x="220" y="533" width="1" height="1"/><rect x="220" y="537" width="1" height="1"/><rect x="221" y="537" width="1" height="1"/><rect x="221" y="536" width="1" height="1"/><rect x="221" y="537" width="1" height="1"/><rect x="222" y="536" width="1" height="1"/><rect x="222" y="538" width="1" height="1"/><rect x="222" y="534" width="1" height="1"/><rect x="223" y="537" width="1" height="1"/><rect x="224" y="535" width="1" height="1"/><rect x="224" y="538" width="1" height="1"/><rect x="225" y="539" width="1" height="1"/><rect x="225" y="538" width="1" height="1"/><rect x="226" y="537" width="1" height="1"/><rect x="226" y="535" width="1" height="1"/><rect x="226" y="536" width="1" height="1"/><rect x="226" y="538" width="1" height="1"/><rect x="227" y="533" width="1" height="1"/><rect x="227" y="538" width="1" height="1"/><rect x="227" y="534" width="1" height="1"/><rect x="227" y="533" width="1" height="1"/><rect x="228" y="536" width="1" height="1"/><rect x="228" y="537" width="1" height="1"/><rect x="228" y="536" width="1" height="1"/><rect x="229" y="537" width="1" height="1"/><rect x="229" y="538" width="1" height="1"/><rect x="230" y="534" width="1" height="1"/><rect x="230" y="534" width="1" height="1"/><rect x="230" y="538" width="1" height="1"/><rect x="231" y="537" width="1" height="1"/><rect x="231" y="535" width="1" height="1"/><rect x="231" y="533" width="1" height="1"/><rect x="232" y="535" width="1" height="1"/><rect x="232" y="533" width="1" height="1"/><rect x="232" y="535" width="1" height="1"/><rect x="233" y="535" width="1" height="1"/><rect x="233" y="538" width="1" height="1"/><rect x="234" y="535" width="1" height="1"/><rect x="234" y="537" width="1" height="1"/><rect x="234" y="537" width="1" height="1"/><rect x="235" y="538" width="1" height="1"/><rect x="235" y="537" width="1" height="1"/><rect x="235" y="533" width="1" height="1"/><rect x="235" y="537" width="1" height="1"/><rect x="236" y="536" width="1" height="1"/><rect x="236" y="537" width="1" height="1"/><rect x="236" y="536" width="1" height="1"/><rect x="237" y="538" width="1" height="1"/><rect x="237" y="539" width="1" height="1"/><rect x="237" y="534" width="1" height="1"/><rect x="238" y="534" width="1" height="1"/><rect x="238" y="533" width="1" height="1"/><rect x="239" y="536" width="1" height="1"/><rect x="239" y="535" width="1" height="1"/><rect x="239" y="538" width="1" height="1"/><rect x="239" y="538" width="1" height="1"/><rect x="240" y="534" width="1" height="1"/><rect x="240" y="538" width="1" height="1"/><rect x="240" y="535" width="1" height="1"/><rect x="241" y="535" width="1" height="1"/><rect x="241" y="537" width="1" height="1"/><rect x="242" y="535" width="1" height="1"/><rect x="242" y="538" width="1" height="1"/><rect x="243" y="534" width="1" height="1"/><rect x="243" y="537" width="1" height="1"/><rect x="244" y="535" width="1" height="1"/><rect x="245" y="535" width="1" height="1"/><rect x="246" y="534" width="1" height="1"/><rect x="246" y="535" width="1" height="1"/><rect x="247" y="535" width="1" height="1"/><rect x="247" y="539" width="1" height="1"/><rect x="248" y="539" width="1" height="1"/><rect x="248" y="535" width="1" height="1"/><rect x="249" y="537" width="1" height="1"/><rect x="249" y="534" width="1" height="1"/><rect x="250" y="534" width="1" height="1"/><rect x="250" y="533" width="1" height="1"/><rect x="251" y="537" width="1" height="1"/><rect x="252" y="534" width="1" height="1"/><rect x="253" y="538" width="1" height="1"/><rect x="253" y="536" width="1" height="1"/><rect x="254" y="534" width="1" height="1"/><rect x="255" y="537" width="1" height="1"/><rect x="256" y="535" width="1" height="1"/><rect x="256" y="536" width="1" height="1"/><rect x="256" y="535" width="1" height="1"/><rect x="257" y="537" width="1" height="1"/><rect x="258" y="535" width="1" height="1"/><rect x="259" y="538" width="1" height="1"/><rect x="259" y="536" width="1" height="1"/><rect x="260" y="536" width="1" height="1"/><rect x="260" y="536" width="1" height="1"/><rect x="261" y="537" width="1" height="1"/><rect x="262" y="536" width="1" height="1"/><rect x="263" y="536" width="1" height="1"/><rect x="264" y="539" width="1" height="1"/><rect x="264" y="537" width="1" height="1"/><rect x="265" y="534" width="1" height="1"/><rect x="266" y="535" width="1" height="1"/><rect x="266" y="533" width="1" height="1"/><rect x="267" y="537" width="1" height="1"/><rect x="267" y="535" width="1" height="1"/><rect x="268" y="538" width="1" height="1"/><rect x="269" y="535" width="1" height="1"/><rect x="269" y="534" width="1" height="1"/><rect x="270" y="536" width="1" height="1"/><rect x="270" y="536" width="1" height="1"/><rect x="271" y="536" width="1" height="1"/><rect x="272" y="536" width="1" height="1"/><rect x="272" y="536" width="1" height="1"/><rect x="272" y="538" width="1" height="1"/><rect x="273" y="538" width="1" height="1"/><rect x="273" y="535" width="1" height="1"/><rect x="274" y="534" width="1" height="1"/><rect x="274" y="537" width="1" height="1"/><rect x="275" y="535" width="1" height="1"/><rect x="275" y="535" width="1" height="1"/><rect x="276" y="535" width="1" height="1"/><rect x="277" y="538" width="1" height="1"/><rect x="278" y="538" width="1" height="1"/><rect x="278" y="533" width="1" height="1"/><rect x="280" y="534" width="1" height="1"/><rect x="280" y="537" width="1" height="1"/><rect x="281" y="538" width="1" height="1"/><rect x="283" y="538" width="1" height="1"/><rect x="284" y="537" width="1" height="1"/><rect x="285" y="538" width="1" height="1"/><rect x="286" y="534" width="1" height="1"/><rect x="286" y="533" width="1" height="1"/><rect x="287" y="536" width="1" height="1"/><rect x="287" y="536" width="1" height="1"/><rect x="288" y="538" width="1" height="1"/><rect x="288" y="536" width="1" height="1"/><rect x="289" y="535" width="1" height="1"/><rect x="289" y="539" width="1" height="1"/><rect x="289" y="536" width="1" height="1"/><rect x="290" y="533" width="1" height="1"/><rect x="291" y="539" width="1" height="1"/><rect x="292" y="538" width="1" height="1"/><rect x="292" y="537" width="1" height="1"/><rect x="293" y="538" width="1" height="1"/><rect x="293" y="536" width="1" height="1"/><rect x="294" y="534" width="1" height="1"/><rect x="294" y="535" width="1" height="1"/><rect x="295" y="535" width="1" height="1"/><rect x="296" y="535" width="1" height="1"/><rect x="297" y="537" width="1" height="1"/><rect x="297" y="535" width="1" height="1"/><rect x="298" y="536" width="1" height="1"/><rect x="298" y="537" width="1" height="1"/><rect x="299" y="535" width="1" height="1"/><rect x="300" y="534" width="1" height="1"/><rect x="301" y="537" width="1" height="1"/><rect x="302" y="536" width="1" height="1"/><rect x="303" y="534" width="1" height="1"/><rect x="304" y="534" width="1" height="1"/><rect x="304" y="533" width="1" height="1"/><rect x="306" y="537" width="1" height="1"/><rect x="307" y="535" width="1" height="1"/><rect x="307" y="535" width="1" height="1"/><rect x="308" y="536" width="1" height="1"/><rect x="308" y="534" width="1" height="1"/><rect x="309" y="536" width="1" height="1"/><rect x="310" y="535" width="1" height="1"/><rect x="311" y="535" width="1" height="1"/><rect x="311" y="536" width="1" height="1"/><rect x="312" y="534" width="1" height="1"/><rect x="312" y="533" width="1" height="1"/><rect x="313" y="539" width="1" height="1"/><rect x="313" y="538" width="1" height="1"/><rect x="313" y="533" width="1" height="1"/><rect x="314" y="534" width="1" height="1"/><rect x="315" y="537" width="1" height="1"/><rect x="316" y="533" width="1" height="1"/><rect x="317" y="538" width="1" height="1"/><rect x="317" y="539" width="1" height="1"/><rect x="318" y="533" width="1" height="1"/><rect x="319" y="535" width="1" height="1"/><rect x="320" y="533" width="1" height="1"/><rect x="321" y="535" width="1" height="1"/><rect x="321" y="537" width="1" height="1"/><rect x="322" y="536" width="1" height="1"/><rect x="323" y="537" width="1" height="1"/><rect x="324" y="535" width="1" height="1"/><rect x="324" y="539" width="1" height="1"/><rect x="325" y="535" width="1" height="1"/><rect x="326" y="536" width="1" height="1"/><rect x="326" y="535" width="1" height="1"/><rect x="327" y="537" width="1" height="1"/><rect x="328" y="535" width="1" height="1"/><rect x="328" y="534" width="1" height="1"/><rect x="329" y="537" width="1" height="1"/><rect x="329" y="538" width="1" height="1"/><rect x="330" y="538" width="1" height="1"/><rect x="332" y="533" width="1" height="1"/><rect x="333" y="534" width="1" height="1"/><rect x="334" y="536" width="1" height="1"/><rect x="335" y="534" width="1" height="1"/><rect x="337" y="537" width="1" height="1"/><rect x="338" y="536" width="1" height="1"/><rect x="341" y="534" width="1" height="1"/><rect x="345" y="539" width="1" height="1"/><rect x="346" y="536" width="1" height="1"/><rect x="347" y="536" width="1" height="1"/><rect x="348" y="533" width="1" height="1"/><rect x="351" y="537" width="1" height="1"/><rect x="354" y="533" width="1" height="1"/><rect x="355" y="533" width="1" height="1"/><rect x="355" y="536" width="1" height="1"/><rect x="358" y="536" width="1" height="1"/><rect x="359" y="539" width="1" height="1"/><rect x="362" y="535" width="1" height="1"/><rect x="364" y="533" width="1" height="1"/><rect x="365" y="538" width="1" height="1"/><rect x="366" y="537" width="1" height="1"/><rect x="368" y="534" width="1" height="1"/><rect x="372" y="535" width="1" height="1"/><rect x="373" y="536" width="1" height="1"/><rect x="374" y="534" width="1" height="1"/><rect x="375" y="537" width="1" height="1"/><rect x="376" y="538" width="1" height="1"/><rect x="379" y="533" width="1" height="1"/><rect x="384" y="533" width="1" height="1"/><rect x="387" y="534" width="1" height="1"/><rect x="389" y="536" width="1" height="1"/><rect x="391" y="538" width="1" height="1"/><rect x="394" y="534" width="1" height="1"/><rect x="396" y="535" width="1" height="1"/><rect x="397" y="537" width="1" height="1"/><rect x="398" y="539" width="1" height="1"/><rect x="398" y="537" width="1" height="1"/><rect x="399" y="534" width="1" height="1"/><rect x="399" y="538" width="1" height="1"/><rect x="401" y="538" width="1" height="1"/><rect x="403" y="537" width="1" height="1"/><rect x="404" y="533" width="1" height="1"/><rect x="404" y="536" width="1" height="1"/><rect x="406" y="536" width="1" height="1"/><rect x="408" y="533" width="1" height="1"/><rect x="409" y="537" width="1" height="1"/><rect x="409" y="537" width="1" height="1"/><rect x="410" y="538" width="1" height="1"/><rect x="411" y="538" width="1" height="1"/><rect x="413" y="534" width="1" height="1"/><rect x="414" y="534" width="1" height="1"/><rect x="415" y="536" width="1" height="1"/><rect x="416" y="536" width="1" height="1"/><rect x="420" y="538" width="1" height="1"/><rect x="423" y="539" width="1" height="1"/><rect x="424" y="534" width="1" height="1"/><rect x="425" y="537" width="1" height="1"/><rect x="425" y="533" width="1" height="1"/><rect x="427" y="536" width="1" height="1"/></g>
<polyline fill="none" stroke="#18b4f0" stroke-width="1" shape-rendering="crispEdges" points="53.4,269.3 54.7,273.6 55.5,263 56.8,259.5 58,258.3 59.2,247.8 60.5,242.2 61,255.8 61.7,282.9 62.3,296.4 63.3,285.3 64.5,271.8 65.4,262 66.6,253.3 68.5,243.5 70.3,259.5 72.8,258.9 74.6,253.3 76.5,242.9 78.6,260.1 82,258.3 84.5,243.5 86.3,260 90,257.6 92.5,242.2 94.3,260 98,258.3 100.5,244.7 102.3,258.3 104.8,260.7 106.2,265.4 107.5,250.6 108.4,242 109.7,259.3 111.8,258.6 113.6,249.4 115.5,242 117.3,259.9 119.2,256.2 120.4,245.7 121.6,232.2 122.9,236.5 124.7,251.9 125.9,259.3 129,258.6 131.5,241.4 133.3,264.8 135.2,259.3 137,253.1 139.5,241.4 142,259.3 145,257.4 147.5,241.4 151.2,261.1 153,255.6 155.5,241.4 158,258.6 161,257.4 163.1,241.4 164.9,258.6 168,258 170.5,241.4 172.3,259.3 176,256.8 178.5,236.5 180.9,250.6 184,263.6 186.5,238.3 189,259.3 192,256.2 194.5,251.3 197,259.3 200,257.4 202.5,241.4 205,259.3 208,257.4 210.5,241.4 213,259.3 216,263 218.3,242.3 220.5,259.9 223,256.8 225.5,241.4 228,259.3 231,257.4 233.5,241.4 237.2,270.3 241.5,241.4 244,259.3 247,256.8 249.5,241.4 252,260.5 255,257.4 257.5,241.4 260.6,261.1 263,256.8 265.5,241.4 268,259.3 271,257.4 275.6,259.3 278.4,255.8 280.5,241.2 282.6,258.6 285.3,257.2 288.1,241.2 290.2,259.3 293.7,257.2 296.5,241.2 298.6,259.3 300,255.8 302.1,241.9 303.5,232.1 304.6,216 306,232.1 307.7,239.1 309.8,259.3 311.9,243.3 314.6,259.3 317.4,257.9 320.2,241.2 323,259.3 325.8,257.2 328.3,241.3 330.5,259.3 333,258 335.5,241.4 338,259.9 341,258.6 343.5,241.4 346,260.5 349,258.6 351.5,241.4 354,259.9 357,258 359.5,241.4 362,259.3 365,257.4 367.5,241.4 369.3,267.3 371.2,260.5 375.5,241.4 378,259.3 381,257.4 383.3,241.4 385.5,259.3 388,257.4 390.5,241.4 393,259.3 396,257.4 398.5,241.4 401,259.3 404,257.4 406.5,241.4 409,259.3 412,253.1 414.5,236.5 417,260.5 420,257.4 422.5,241.4 425,259.3 426.8,244.5 428.7,230.3 430.5,234.6 433,259.3 436.4,270.4 438.5,241.4 441,259.3 443.5,257.4"/>
</svg>
 <div class="a" style="left:53px;top:157px;line-height:13px;letter-spacing:-0.3px">MB/s</div>
 <div class="a" style="left:430px;top:157px;line-height:13px;letter-spacing:-0.3px">ms</div>
 <div class="yl" style="top:164px">500</div>
<div class="yl" style="top:204px">450</div>
<div class="yl" style="top:243px">400</div>
<div class="yl" style="top:283px">350</div>
<div class="yl" style="top:323px">300</div>
<div class="yl" style="top:362px">250</div>
<div class="yl" style="top:402px">200</div>
<div class="yl" style="top:442px">150</div>
<div class="yl" style="top:482px">100</div>
<div class="yl" style="top:521px">50</div>
<div class="yr" style="top:164px">0.50</div>
<div class="yr" style="top:204px">0.45</div>
<div class="yr" style="top:243px">0.40</div>
<div class="yr" style="top:283px">0.35</div>
<div class="yr" style="top:323px">0.30</div>
<div class="yr" style="top:362px">0.25</div>
<div class="yr" style="top:402px">0.20</div>
<div class="yr" style="top:442px">0.15</div>
<div class="yr" style="top:482px">0.10</div>
<div class="yr" style="top:521px">0.05</div>
<div class="xl" style="left:33px">0</div>
<div class="xl" style="left:72px">12</div>
<div class="xl" style="left:111px">24</div>
<div class="xl" style="left:150px">36</div>
<div class="xl" style="left:189px">48</div>
<div class="xl" style="left:228px">60</div>
<div class="xl" style="left:268px">72</div>
<div class="xl" style="left:307px">84</div>
<div class="xl" style="left:346px">96</div>
<div class="xl" style="left:385px">108</div>
<div class="xl" style="left:428px;width:auto;text-align:left;letter-spacing:-0.3px">120gB</div>

 <!-- right controls -->
 <div class="btn" style="left:487px;top:151px;width:73px;height:21px"></div>
 <div class="a" style="left:487px;top:156px;width:73px;text-align:center;line-height:13px;font-size:12px;transform:scaleX(.87)">Start</div>
 <div class="sep" style="top:182px"></div>
 <svg class="a" style="left:483px;top:189px" width="12" height="12" viewBox="0 0 12 12"><defs><radialGradient id="rb" cx=".4" cy=".35" r=".7"><stop offset="0" stop-color="#7ad8ff"/><stop offset=".5" stop-color="#2090d8"/><stop offset="1" stop-color="#0a4a8a"/></radialGradient><radialGradient id="rw" cx=".5" cy=".6" r=".6"><stop offset="0" stop-color="#d4d8dc"/><stop offset="1" stop-color="#f6f6f6"/></radialGradient></defs><circle cx="6" cy="6" r="5.5" fill="#f4f4f4" stroke="#8c8e8e"/><circle cx="6" cy="6" r="3.6" fill="url(#rb)" stroke="#0c2c50" stroke-width=".9"/></svg>
 <svg class="a" style="left:483px;top:205px" width="12" height="12" viewBox="0 0 12 12"><circle cx="6" cy="6" r="5.5" fill="url(#rw)" stroke="#8c8e8e"/></svg>
 <div class="lbl" style="left:499px;top:188.5px">Read</div>
 <div class="lbl" style="left:499px;top:204.5px">Write</div>
 <div class="sep" style="top:221px"></div>
 <div class="cb" style="top:229px"></div>
 <div class="lbl" style="left:499px;top:230px">Short stroke</div>
 <div class="a" style="left:483px;top:249px;width:62px;height:20px;border:1px solid #abadb3;background:#fff;border-radius:2px"></div>
 <div class="a" style="left:486px;top:252.5px;color:#8a8a8a;font-size:12px;line-height:13px;transform:scaleX(.87);transform-origin:0 0">40</div>
 <div class="a" style="left:528px;top:251px;width:15px;height:8px;border:1px solid #c8c8c8;background:#f0f0f0"></div>
 <div class="a" style="left:528px;top:259px;width:15px;height:8px;border:1px solid #c8c8c8;background:#f0f0f0"></div>
 <svg class="a" style="left:532px;top:253px" width="7" height="13"><path d="M1 4H6L3.5 1.5ZM1 9H6L3.5 11.5Z" fill="#a8a8a8"/></svg>
 <div class="lbl" style="left:556px;top:253px">gB</div>
 <div class="cb" style="top:278px"></div>
 <svg class="a" style="left:485px;top:280px" width="10" height="10"><path d="M1.5 5l2.5 3.5 4.5-7.5" stroke="#30407a" stroke-width="1.6" fill="none"/></svg>
 <div class="lbl" style="left:499px;top:278.5px">Transfer rate</div>
 <div class="sep" style="top:293px"></div>
 <div class="lbl" style="top:297px;transform:scaleX(.83)">Minimum</div>
 <div class="box" style="top:312px">340.6 MB/s</div>
 <div class="lbl" style="top:330.5px;transform:scaleX(.83)">Maximum</div>
 <div class="box" style="top:344px">441.0 MB/s</div>
 <div class="lbl" style="top:360.5px;transform:scaleX(.85)">Average</div>
 <div class="box" style="top:375px">393.5 MB/s</div>
 <div class="sep" style="top:397px"></div>
 <div class="cb" style="top:403px"></div>
 <svg class="a" style="left:485px;top:405px" width="10" height="10"><path d="M1.5 5l2.5 3.5 4.5-7.5" stroke="#30407a" stroke-width="1.6" fill="none"/></svg>
 <div class="lbl" style="left:499px;top:404px">Access time</div>
 <div class="box" style="top:419px;color:#f8f800">0.042 ms</div>
 <div class="cb" style="top:437px"></div>
 <svg class="a" style="left:485px;top:439px" width="10" height="10"><path d="M1.5 5l2.5 3.5 4.5-7.5" stroke="#30407a" stroke-width="1.6" fill="none"/></svg>
 <div class="lbl" style="left:499px;top:438px">Burst rate</div>
 <div class="box" style="top:453px;color:#fff">293.0 MB/s</div>
 <div class="lbl" style="top:471px">CPU usage</div>
 <div class="box" style="top:486px;color:#fff">3.0%</div>
</div>
</body></html>
